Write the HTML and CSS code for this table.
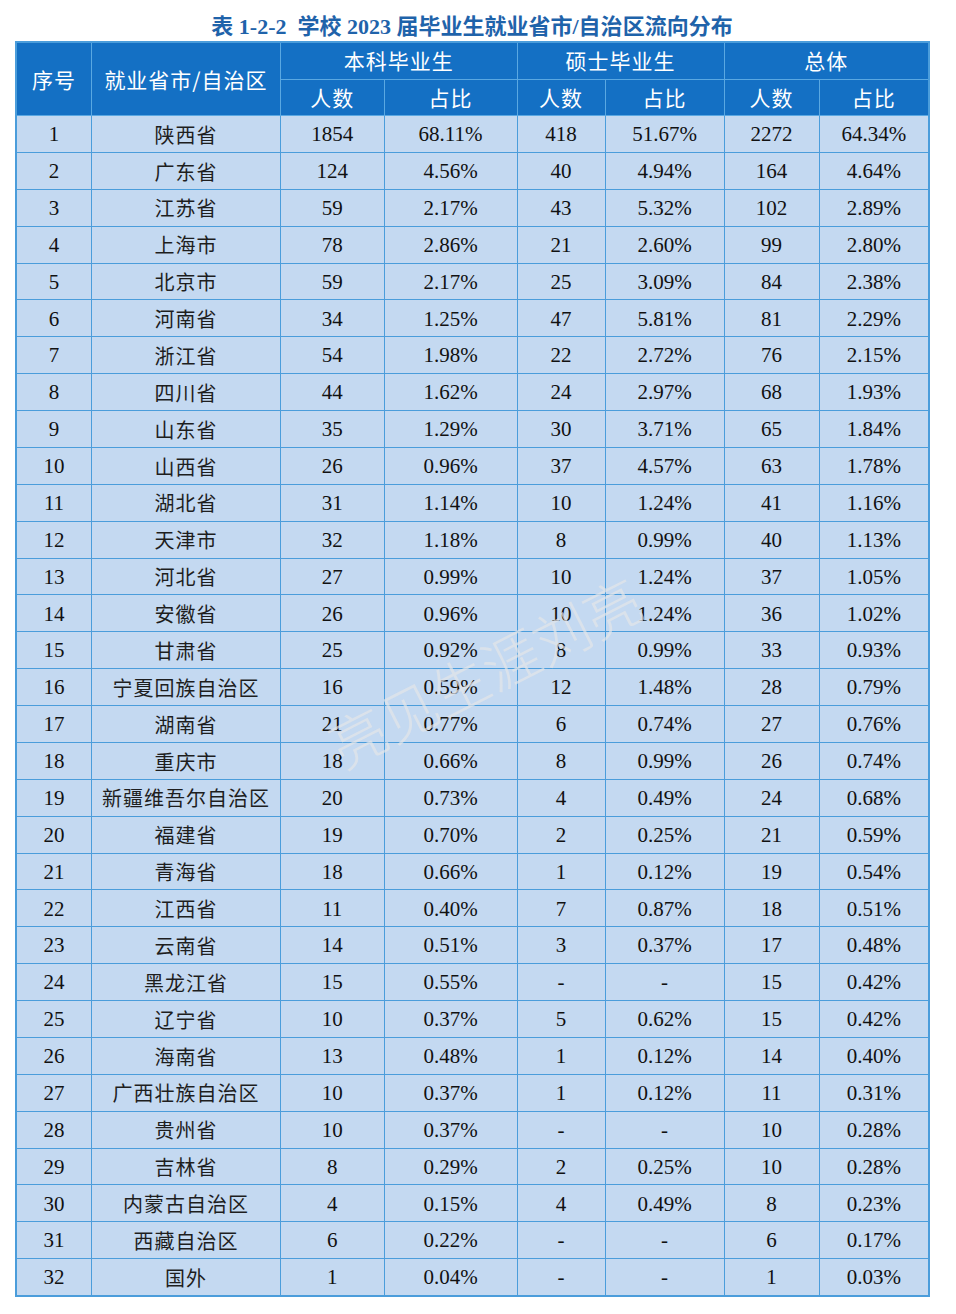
FILE: index.html
```html
<!DOCTYPE html>
<html lang="zh-CN">
<head>
<meta charset="utf-8">
<title>表 1-2-2</title>
<link rel="stylesheet" href="styles.css">
</head>
<body>
<div class="page">
  <h1 class="title">表 1-2-2&nbsp; 学校 2023 届毕业生就业省市/自治区流向分布</h1>
  <div class="table-wrap">
    <table class="data">
      <colgroup>
        <col class="c1"><col class="c2"><col class="c3"><col class="c4"><col class="c5"><col class="c6"><col class="c7"><col class="c8">
      </colgroup>
      <thead>
        <tr>
          <th rowspan="2">序号</th>
          <th rowspan="2">就业省市/自治区</th>
          <th colspan="2">本科毕业生</th>
          <th colspan="2">硕士毕业生</th>
          <th colspan="2">总体</th>
        </tr>
        <tr>
          <th>人数</th><th>占比</th><th>人数</th><th>占比</th><th>人数</th><th>占比</th>
        </tr>
      </thead>
      <tbody>
        <tr><td>1</td><td class="cn">陕西省</td><td>1854</td><td>68.11%</td><td>418</td><td>51.67%</td><td>2272</td><td>64.34%</td></tr>
        <tr><td>2</td><td class="cn">广东省</td><td>124</td><td>4.56%</td><td>40</td><td>4.94%</td><td>164</td><td>4.64%</td></tr>
        <tr><td>3</td><td class="cn">江苏省</td><td>59</td><td>2.17%</td><td>43</td><td>5.32%</td><td>102</td><td>2.89%</td></tr>
        <tr><td>4</td><td class="cn">上海市</td><td>78</td><td>2.86%</td><td>21</td><td>2.60%</td><td>99</td><td>2.80%</td></tr>
        <tr><td>5</td><td class="cn">北京市</td><td>59</td><td>2.17%</td><td>25</td><td>3.09%</td><td>84</td><td>2.38%</td></tr>
        <tr><td>6</td><td class="cn">河南省</td><td>34</td><td>1.25%</td><td>47</td><td>5.81%</td><td>81</td><td>2.29%</td></tr>
        <tr><td>7</td><td class="cn">浙江省</td><td>54</td><td>1.98%</td><td>22</td><td>2.72%</td><td>76</td><td>2.15%</td></tr>
        <tr><td>8</td><td class="cn">四川省</td><td>44</td><td>1.62%</td><td>24</td><td>2.97%</td><td>68</td><td>1.93%</td></tr>
        <tr><td>9</td><td class="cn">山东省</td><td>35</td><td>1.29%</td><td>30</td><td>3.71%</td><td>65</td><td>1.84%</td></tr>
        <tr><td>10</td><td class="cn">山西省</td><td>26</td><td>0.96%</td><td>37</td><td>4.57%</td><td>63</td><td>1.78%</td></tr>
        <tr><td>11</td><td class="cn">湖北省</td><td>31</td><td>1.14%</td><td>10</td><td>1.24%</td><td>41</td><td>1.16%</td></tr>
        <tr><td>12</td><td class="cn">天津市</td><td>32</td><td>1.18%</td><td>8</td><td>0.99%</td><td>40</td><td>1.13%</td></tr>
        <tr><td>13</td><td class="cn">河北省</td><td>27</td><td>0.99%</td><td>10</td><td>1.24%</td><td>37</td><td>1.05%</td></tr>
        <tr><td>14</td><td class="cn">安徽省</td><td>26</td><td>0.96%</td><td>10</td><td>1.24%</td><td>36</td><td>1.02%</td></tr>
        <tr><td>15</td><td class="cn">甘肃省</td><td>25</td><td>0.92%</td><td>8</td><td>0.99%</td><td>33</td><td>0.93%</td></tr>
        <tr><td>16</td><td class="cn">宁夏回族自治区</td><td>16</td><td>0.59%</td><td>12</td><td>1.48%</td><td>28</td><td>0.79%</td></tr>
        <tr><td>17</td><td class="cn">湖南省</td><td>21</td><td>0.77%</td><td>6</td><td>0.74%</td><td>27</td><td>0.76%</td></tr>
        <tr><td>18</td><td class="cn">重庆市</td><td>18</td><td>0.66%</td><td>8</td><td>0.99%</td><td>26</td><td>0.74%</td></tr>
        <tr><td>19</td><td class="cn">新疆维吾尔自治区</td><td>20</td><td>0.73%</td><td>4</td><td>0.49%</td><td>24</td><td>0.68%</td></tr>
        <tr><td>20</td><td class="cn">福建省</td><td>19</td><td>0.70%</td><td>2</td><td>0.25%</td><td>21</td><td>0.59%</td></tr>
        <tr><td>21</td><td class="cn">青海省</td><td>18</td><td>0.66%</td><td>1</td><td>0.12%</td><td>19</td><td>0.54%</td></tr>
        <tr><td>22</td><td class="cn">江西省</td><td>11</td><td>0.40%</td><td>7</td><td>0.87%</td><td>18</td><td>0.51%</td></tr>
        <tr><td>23</td><td class="cn">云南省</td><td>14</td><td>0.51%</td><td>3</td><td>0.37%</td><td>17</td><td>0.48%</td></tr>
        <tr><td>24</td><td class="cn">黑龙江省</td><td>15</td><td>0.55%</td><td>-</td><td>-</td><td>15</td><td>0.42%</td></tr>
        <tr><td>25</td><td class="cn">辽宁省</td><td>10</td><td>0.37%</td><td>5</td><td>0.62%</td><td>15</td><td>0.42%</td></tr>
        <tr><td>26</td><td class="cn">海南省</td><td>13</td><td>0.48%</td><td>1</td><td>0.12%</td><td>14</td><td>0.40%</td></tr>
        <tr><td>27</td><td class="cn">广西壮族自治区</td><td>10</td><td>0.37%</td><td>1</td><td>0.12%</td><td>11</td><td>0.31%</td></tr>
        <tr><td>28</td><td class="cn">贵州省</td><td>10</td><td>0.37%</td><td>-</td><td>-</td><td>10</td><td>0.28%</td></tr>
        <tr><td>29</td><td class="cn">吉林省</td><td>8</td><td>0.29%</td><td>2</td><td>0.25%</td><td>10</td><td>0.28%</td></tr>
        <tr><td>30</td><td class="cn">内蒙古自治区</td><td>4</td><td>0.15%</td><td>4</td><td>0.49%</td><td>8</td><td>0.23%</td></tr>
        <tr><td>31</td><td class="cn">西藏自治区</td><td>6</td><td>0.22%</td><td>-</td><td>-</td><td>6</td><td>0.17%</td></tr>
        <tr><td>32</td><td class="cn">国外</td><td>1</td><td>0.04%</td><td>-</td><td>-</td><td>1</td><td>0.03%</td></tr>
      </tbody>
    </table>
    <div class="watermark">亮见生涯刘亮</div>
  </div>
</div>
</body>
</html>
```

FILE: styles.css
```css
html, body {
  margin: 0;
  padding: 0;
  background: #ffffff;
}

.page {
  width: 956px;
  padding-top: 13px;
}

.title {
  margin: 0;
  height: 28px;
  line-height: 28px;
  text-align: center;
  font-family: "Liberation Serif", "Noto Sans CJK SC", serif;
  font-weight: bold;
  font-size: 22px;
  color: #1f63aa;
  transform: translateX(-6px);
}

.table-wrap {
  position: relative;
  margin-left: 15px;
  width: 913px;
}

.data {
  border-collapse: collapse;
  table-layout: fixed;
  width: 913px;
  border: 2px solid #4b9ddb;
}

.c1 { width: 75.5px; }
.c2 { width: 189px; }
.c3 { width: 103.5px; }
.c4 { width: 133px; }
.c5 { width: 88px; }
.c6 { width: 119px; }
.c7 { width: 95px; }
.c8 { width: 110px; }

.data th {
  background: #1470c4;
  color: #ffffff;
  font-family: "Noto Sans CJK SC", "Liberation Sans", sans-serif;
  font-weight: normal;
  font-size: 21px;
  letter-spacing: 1px;
  height: 35.5px;
  padding: 0;
  text-align: center;
  vertical-align: middle;
  border: 1.5px solid #5aa8e2;
  line-height: 1;
}

.data td {
  background: #c4d9f1;
  color: #111111;
  font-family: "Liberation Serif", "Noto Sans CJK SC", serif;
  font-size: 21px;
  height: 34.375px;
  padding: 1.5px 0 0;
  text-align: center;
  vertical-align: middle;
  border: 1.5px solid #4b9ddb;
  line-height: 1;
}

.data td.cn {
  font-family: "Noto Sans CJK SC", "Liberation Serif", sans-serif;
  font-size: 20px;
  font-weight: 400;
  letter-spacing: 1px;
  color: #1e1e1e;
}

.watermark {
  position: absolute;
  left: 298px;
  top: 588px;
  font-family: "Noto Sans CJK SC", sans-serif;
  font-size: 57px;
  font-weight: 300;
  color: rgba(228, 230, 232, 0.7);
  transform: rotate(-27deg);
  transform-origin: center center;
  white-space: nowrap;
  pointer-events: none;
}
```
